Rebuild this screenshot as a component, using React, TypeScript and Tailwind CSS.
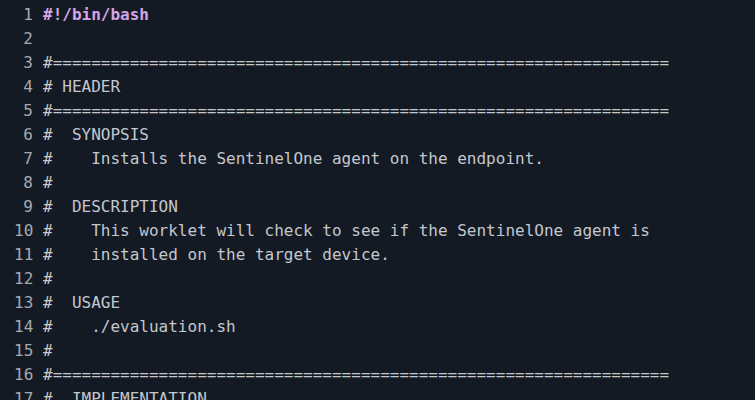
const lines: { text: string; kind?: 'shebang' }[] = [
  { text: '#!/bin/bash', kind: 'shebang' },
  { text: '' },
  { text: '#' + '='.repeat(64) },
  { text: '# HEADER' },
  { text: '#' + '='.repeat(64) },
  { text: '#  SYNOPSIS' },
  { text: '#    Installs the SentinelOne agent on the endpoint.' },
  { text: '#' },
  { text: '#  DESCRIPTION' },
  { text: '#    This worklet will check to see if the SentinelOne agent is' },
  { text: '#    installed on the target device.' },
  { text: '#' },
  { text: '#  USAGE' },
  { text: '#    ./evaluation.sh' },
  { text: '#' },
  { text: '#' + '='.repeat(64) },
  { text: '#  IMPLEMENTATION' },
];

export default function App() {
  return (
    <div className="w-[755px] h-[400px] overflow-hidden bg-[#141a24] pt-[3px] pl-[14px] font-['DejaVu_Sans_Mono','Liberation_Mono',monospace] text-[16px] leading-[24px]">
      {lines.map((line, i) => (
        <div key={i} className="flex whitespace-pre">
          <span className="w-[19px] text-right text-[#a4a9b1] shrink-0">{i + 1}</span>
          <span className="pl-[10px]">
            {line.kind === 'shebang' ? (
              <span className="font-bold text-[#d2a6e6]">{line.text}</span>
            ) : (
              <span className="text-[#c3c7ce]">{line.text}</span>
            )}
          </span>
        </div>
      ))}
    </div>
  );
}
